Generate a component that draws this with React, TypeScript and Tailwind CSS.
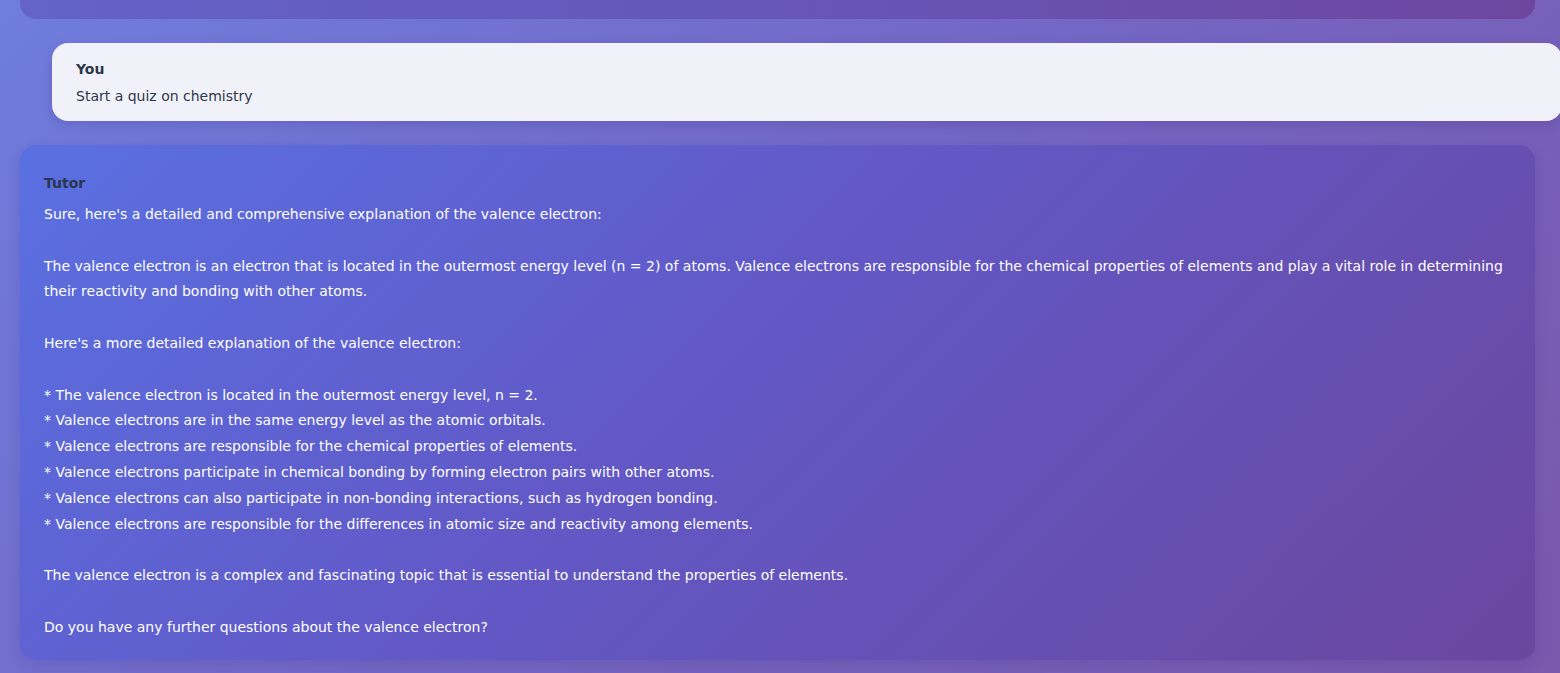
import React from 'react';

const tutorText = `Sure, here's a detailed and comprehensive explanation of the valence electron:

The valence electron is an electron that is located in the outermost energy level (n = 2) of atoms. Valence electrons are responsible for the chemical properties of elements and play a vital role in determining
their reactivity and bonding with other atoms.

Here's a more detailed explanation of the valence electron:

* The valence electron is located in the outermost energy level, n = 2.
* Valence electrons are in the same energy level as the atomic orbitals.
* Valence electrons are responsible for the chemical properties of elements.
* Valence electrons participate in chemical bonding by forming electron pairs with other atoms.
* Valence electrons can also participate in non-bonding interactions, such as hydrogen bonding.
* Valence electrons are responsible for the differences in atomic size and reactivity among elements.

The valence electron is a complex and fascinating topic that is essential to understand the properties of elements.

Do you have any further questions about the valence electron?`;

export default function App() {
  return (
    <div
      className="h-[673px] w-[1560px] overflow-hidden bg-[linear-gradient(135deg,#6f7ddd_0%,#7466c4_50%,#7a58ac_100%)] px-5 font-['DejaVu_Sans',sans-serif]"
    >
      <div className="flex w-[1515px] flex-col gap-6">
        {/* previous message, scrolled mostly out of view */}
        <div className="h-[19px] rounded-b-2xl bg-[linear-gradient(90deg,#6363c8_0%,#6656b8_50%,#6e46a0_100%)]" />

        {/* user message */}
        <div className="ml-8 w-[1510px] rounded-2xl bg-[#f1f1fa] px-6 pb-[14px] pt-4 text-[#2d3748] shadow-[0_4px_12px_rgba(40,30,110,0.18)]">
          <div className="mb-[6px] text-[14px] font-bold leading-5">You</div>
          <div className="text-[14px] leading-[22px]">Start a quiz on chemistry</div>
        </div>

        {/* tutor message */}
        <div className="h-[515px] rounded-2xl bg-[linear-gradient(135deg,#5a70e2_0%,#6258c6_45%,#6a479f_100%)] px-6 pb-5 pt-[25px] shadow-[0_4px_14px_rgba(40,30,110,0.15)]">
          <div className="mb-[6px] text-[14px] font-bold leading-[26px] text-[#2a3550]">Tutor</div>
          <div className="whitespace-pre-wrap text-[14px] leading-[25.8px] text-white">{tutorText}</div>
        </div>
      </div>
    </div>
  );
}
